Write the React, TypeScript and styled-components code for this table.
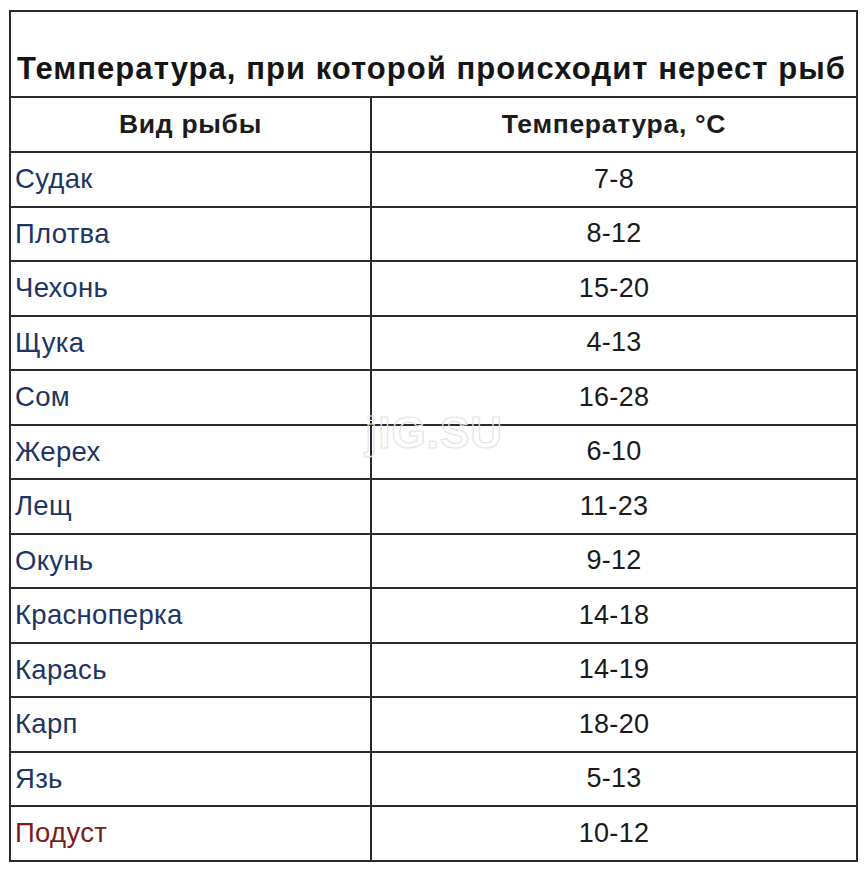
import React from "react";
import styled, { createGlobalStyle } from "styled-components";

const GlobalStyle = createGlobalStyle`
  html, body {
    margin: 0;
    padding: 0;
    background: #ffffff;
  }
  body {
    font-family: "Liberation Sans", Arial, sans-serif;
  }
`;

interface Fish {
  name: string;
  temp: string;
  highlight?: boolean;
}

const fish: Fish[] = [
  { name: "Судак", temp: "7-8" },
  { name: "Плотва", temp: "8-12" },
  { name: "Чехонь", temp: "15-20" },
  { name: "Щука", temp: "4-13" },
  { name: "Сом", temp: "16-28" },
  { name: "Жерех", temp: "6-10" },
  { name: "Лещ", temp: "11-23" },
  { name: "Окунь", temp: "9-12" },
  { name: "Красноперка", temp: "14-18" },
  { name: "Карась", temp: "14-19" },
  { name: "Карп", temp: "18-20" },
  { name: "Язь", temp: "5-13" },
  { name: "Подуст", temp: "10-12", highlight: true },
];

function App() {
  return (
    <Page>
      <GlobalStyle />
      <TableWrap>
        <Table>
          <colgroup>
            <col style={{ width: 361 }} />
            <col />
          </colgroup>
          <thead>
            <TitleRow>
              <Title colSpan={2}>Температура, при которой происходит нерест рыб</Title>
            </TitleRow>
            <HeadRow>
              <HeadCell>Вид рыбы</HeadCell>
              <HeadCell>Температура, °С</HeadCell>
            </HeadRow>
          </thead>
          <tbody>
            {fish.map((f) => (
              <Row key={f.name}>
                <NameCell $highlight={f.highlight}>{f.name}</NameCell>
                <TempCell>{f.temp}</TempCell>
              </Row>
            ))}
          </tbody>
        </Table>
        <Watermark>jIG.SU</Watermark>
      </TableWrap>
    </Page>
  );
}

const Page = styled.div`
  width: 864px;
  height: 869px;
  padding: 10px 0 0 9px;
  box-sizing: border-box;
`;

const TableWrap = styled.div`
  position: relative;
  width: 849px;
`;

const Table = styled.table`
  width: 849px;
  border-collapse: collapse;
  table-layout: fixed;
  border: 2px solid #2b2b2b;

  td,
  th {
    border: 2px solid #2b2b2b;
    padding: 0;
    box-sizing: border-box;
  }
`;

const TitleRow = styled.tr`
  height: 86px;
`;

const HeadRow = styled.tr`
  height: 55px;
`;

const Row = styled.tr`
  height: 54.5px;
`;

const Title = styled.th`
  vertical-align: bottom;
  text-align: left;
  padding: 0 0 9px 6px !important;
  font-size: 31px;
  letter-spacing: 1.05px;
  font-weight: 700;
  color: #151515;
  white-space: nowrap;
`;

const HeadCell = styled.th`
  text-align: center;
  font-size: 26.5px;
  letter-spacing: 0.7px;
  font-weight: 700;
  color: #1c1c1c;
`;

const NameCell = styled.td<{ $highlight?: boolean }>`
  padding-left: 4px !important;
  font-size: 27.5px;
  letter-spacing: 0.3px;
  color: ${(p) => (p.$highlight ? "#7a1c1c" : "#1d3562")};
`;

const TempCell = styled.td`
  text-align: center;
  font-size: 27px;
  letter-spacing: 0.3px;
  color: #1a1a1a;
`;

const Watermark = styled.div`
  position: absolute;
  left: 356px;
  top: 398px;
  font-size: 44px;
  font-weight: 700;
  letter-spacing: 1px;
  color: transparent;
  -webkit-text-stroke: 1.2px #e4e4e4;
  pointer-events: none;
`;

export default App;
